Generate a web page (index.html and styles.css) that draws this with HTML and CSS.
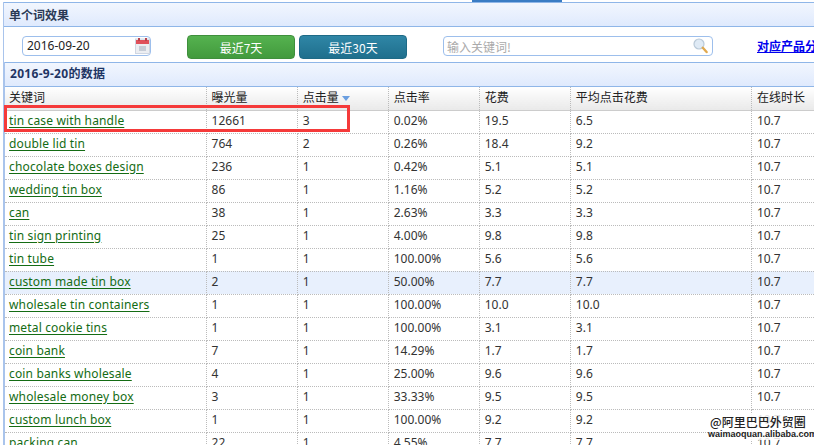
FILE: index.html
```html
<!DOCTYPE html>
<html lang="en">
<head>
  <meta charset="UTF-8" />
  <title>单个词效果</title>
  <link rel="stylesheet" href="styles.css">
</head>
<body>
  <div class="top-tabs">
    <span class="tab-active"></span>
  </div>
  <div class="panel">
    <h3 class="panel-title">单个词效果</h3>
    <div class="toolbar">
      <div class="date-box">
        <span>2016-09-20</span>
        <svg class="cal-icon" width="15" height="16" viewBox="0 0 15 16">
          <rect x="0.5" y="1" width="14" height="14.5" fill="#eceef2" stroke="#cfd6e2"/>
          <rect x="1" y="2" width="13" height="4" fill="#e0505a"/>
          <rect x="3" y="0" width="2" height="3" fill="#b9434c"/>
          <rect x="10" y="0" width="2" height="3" fill="#b9434c"/>
          <rect x="4" y="8" width="7" height="5" fill="#c6ccd6"/>
        </svg>
      </div>
      <button class="btn btn-green">最近7天</button>
      <button class="btn btn-teal">最近30天</button>
      <div class="search-box">
        <span>输入关键词!</span>
        <svg class="search-icon" width="15" height="16" viewBox="0 0 15 16">
          <circle cx="6" cy="6" r="5" fill="#dfeaf5" stroke="#b9c9d8" stroke-width="1.2"/>
          <path d="M9.8 9.8 L13.6 14" stroke="#e0a94f" stroke-width="2.4" stroke-linecap="round"/>
        </svg>
      </div>
      <a class="analysis-link" href="#">对应产品分析</a>
    </div>
    <div class="data-box">
      <h4 class="data-title">2016-9-20的数据</h4>
      <table class="data-table">
        <colgroup>
          <col class="col-word"><col class="col-num"><col class="col-num"><col class="col-num"><col class="col-num"><col class="col-avg"><col class="col-last">
        </colgroup>
        <thead>
          <tr>
            <th>关键词</th><th>曝光量</th><th>点击量 <i class="sort-arrow"></i></th><th>点击率</th><th>花费</th><th>平均点击花费</th><th>在线时长</th>
          </tr>
        </thead>
        <tbody>
          <tr><td><a href="#">tin case with handle</a></td><td>12661</td><td>3</td><td>0.02%</td><td>19.5</td><td>6.5</td><td>10.7</td></tr>
          <tr><td><a href="#">double lid tin</a></td><td>764</td><td>2</td><td>0.26%</td><td>18.4</td><td>9.2</td><td>10.7</td></tr>
          <tr><td><a href="#">chocolate boxes design</a></td><td>236</td><td>1</td><td>0.42%</td><td>5.1</td><td>5.1</td><td>10.7</td></tr>
          <tr><td><a href="#">wedding tin box</a></td><td>86</td><td>1</td><td>1.16%</td><td>5.2</td><td>5.2</td><td>10.7</td></tr>
          <tr><td><a href="#">can</a></td><td>38</td><td>1</td><td>2.63%</td><td>3.3</td><td>3.3</td><td>10.7</td></tr>
          <tr><td><a href="#">tin sign printing</a></td><td>25</td><td>1</td><td>4.00%</td><td>9.8</td><td>9.8</td><td>10.7</td></tr>
          <tr><td><a href="#">tin tube</a></td><td>1</td><td>1</td><td>100.00%</td><td>5.6</td><td>5.6</td><td>10.7</td></tr>
          <tr class="row-hover"><td><a href="#">custom made tin box</a></td><td>2</td><td>1</td><td>50.00%</td><td>7.7</td><td>7.7</td><td>10.7</td></tr>
          <tr><td><a href="#">wholesale tin containers</a></td><td>1</td><td>1</td><td>100.00%</td><td>10.0</td><td>10.0</td><td>10.7</td></tr>
          <tr><td><a href="#">metal cookie tins</a></td><td>1</td><td>1</td><td>100.00%</td><td>3.1</td><td>3.1</td><td>10.7</td></tr>
          <tr><td><a href="#">coin bank</a></td><td>7</td><td>1</td><td>14.29%</td><td>1.7</td><td>1.7</td><td>10.7</td></tr>
          <tr><td><a href="#">coin banks wholesale</a></td><td>4</td><td>1</td><td>25.00%</td><td>9.6</td><td>9.6</td><td>10.7</td></tr>
          <tr><td><a href="#">wholesale money box</a></td><td>3</td><td>1</td><td>33.33%</td><td>9.5</td><td>9.5</td><td>10.7</td></tr>
          <tr><td><a href="#">custom lunch box</a></td><td>1</td><td>1</td><td>100.00%</td><td>9.2</td><td>9.2</td><td>10.7</td></tr>
          <tr><td><a href="#">packing can</a></td><td>22</td><td>1</td><td>4.55%</td><td>7.7</td><td>7.7</td><td>10.7</td></tr>
        </tbody>
      </table>
    </div>
  </div>
  <div class="red-box"></div>
  <div class="watermark">
    <div class="wm-cn">@阿里巴巴外贸圈</div>
    <div class="wm-en">waimaoquan.alibaba.com</div>
  </div>
</body>
</html>
```

FILE: styles.css
```css
* {
  box-sizing: border-box;
  margin: 0;
  padding: 0;
}

html, body {
  width: 814px;
  height: 445px;
  overflow: hidden;
}

body {
  position: relative;
  background: #fff;
  font-family: "Noto Sans", "Noto Sans CJK SC", sans-serif;
  font-size: 12px;
  color: #333;
}

.top-tabs {
  height: 2px;
  background: #fff;
  padding-left: 472px;
}

.tab-active {
  display: block;
  width: 90px;
  height: 2px;
  background: #3a7cc4;
}

.panel {
  margin-left: 3px;
  width: 860px;
  border-left: 1px solid #a9c4ec;
}

.panel-title {
  height: 25px;
  padding-left: 5px;
  line-height: 24px;
  font-family: "Noto Sans CJK SC", sans-serif;
  font-size: 12px;
  font-weight: bold;
  color: #2b3a55;
  border-top: 1px solid #8fb6e8;
  border-bottom: 1px solid #8fb6e8;
  background: linear-gradient(#f2f6fe, #dfeafd);
}

.toolbar {
  display: flex;
  align-items: center;
  height: 35px;
  padding: 3px 0 0 18px;
}

.date-box, .search-box {
  display: flex;
  align-items: center;
  justify-content: space-between;
  height: 20px;
  border: 1px solid #9dbfec;
  border-radius: 4px;
  background: #fff;
}

.date-box {
  width: 129px;
  padding: 0 0 1px 4px;
  color: #222;
}

.btn {
  height: 24px;
  margin-top: 2px;
  border-radius: 4px;
  color: #fff;
  font-family: "Noto Sans CJK SC", sans-serif;
  font-size: 12px;
  width: 108px;
}

.btn-green {
  margin-left: 36px;
  border: 1px solid #3f8f3c;
  background: linear-gradient(#55b24f, #429a3d);
}

.btn-teal {
  margin-left: 4px;
  border: 1px solid #1e6a86;
  background: linear-gradient(#2f86a6, #1f6f8d);
}

.search-box {
  width: 270px;
  margin-left: 36px;
  padding: 0 4px 0 3px;
  font-family: "Noto Sans CJK SC", sans-serif;
  color: #aaa;
}

.analysis-link {
  margin: -2px 0 0 44px;
  font-family: "Noto Sans CJK SC", sans-serif;
  font-weight: bold;
  color: #0000ee;
  white-space: nowrap;
}

.data-box {
  border-left: 1px solid #a9c4ec;
}

.data-title {
  height: 25px;
  padding-left: 5px;
  line-height: 21px;
  font-size: 12px;
  font-weight: bold;
  letter-spacing: 0.3px;
  color: #1f3564;
  border-top: 1px solid #8fb6e8;
  border-bottom: 1px solid #8fb6e8;
  background: linear-gradient(#f2f6fe, #dfeafd);
}

.data-table {
  width: 855px;
  table-layout: fixed;
  border-collapse: collapse;
}

.col-word { width: 201px; }
.col-num { width: 91px; }
.col-avg { width: 181px; }
.col-last { width: 108px; }

.data-table th {
  height: 23px;
  padding: 0 0 2px 5px;
  line-height: 16px;
  text-align: left;
  font-family: "Noto Sans CJK SC", sans-serif;
  font-size: 12px;
  font-weight: normal;
  color: #222;
  background: linear-gradient(#fff, #e9e9e9);
  border-bottom: 1px solid #ccc;
  border-right: 1px dotted #bbb;
}

.data-table td {
  height: 23px;
  padding: 0 0 2px 5px;
  line-height: 16px;
  color: #333;
  white-space: nowrap;
  border-bottom: 1px dotted #bbb;
  border-right: 1px dotted #bbb;
}

.data-table th:first-child,
.data-table td:first-child {
  padding-left: 4px;
}

.data-table a {
  color: #146c14;
  letter-spacing: 0.15px;
  text-underline-offset: 2px;
}

.row-hover td {
  background: #e8f0fd;
}

.sort-arrow {
  display: inline-block;
  margin-left: 1px;
  vertical-align: middle;
  border-left: 4px solid transparent;
  border-right: 4px solid transparent;
  border-top: 5px solid #6a9ee0;
}

.red-box {
  position: absolute;
  left: 4px;
  top: 105px;
  width: 346px;
  height: 27px;
  border: 3px solid #f53a3a;
}

.watermark {
  position: absolute;
  left: 708px;
  top: 414px;
  width: 100px;
  color: #222;
  background: rgba(255, 255, 255, 0.85);
}

.wm-cn {
  font-family: "Noto Sans CJK SC", sans-serif;
  font-size: 12px;
  line-height: 15px;
  padding-left: 2px;
  font-weight: 500;
}

.wm-en {
  font-family: "Liberation Sans", sans-serif;
  font-size: 9px;
  line-height: 11px;
  font-weight: bold;
  white-space: nowrap;
}
```
